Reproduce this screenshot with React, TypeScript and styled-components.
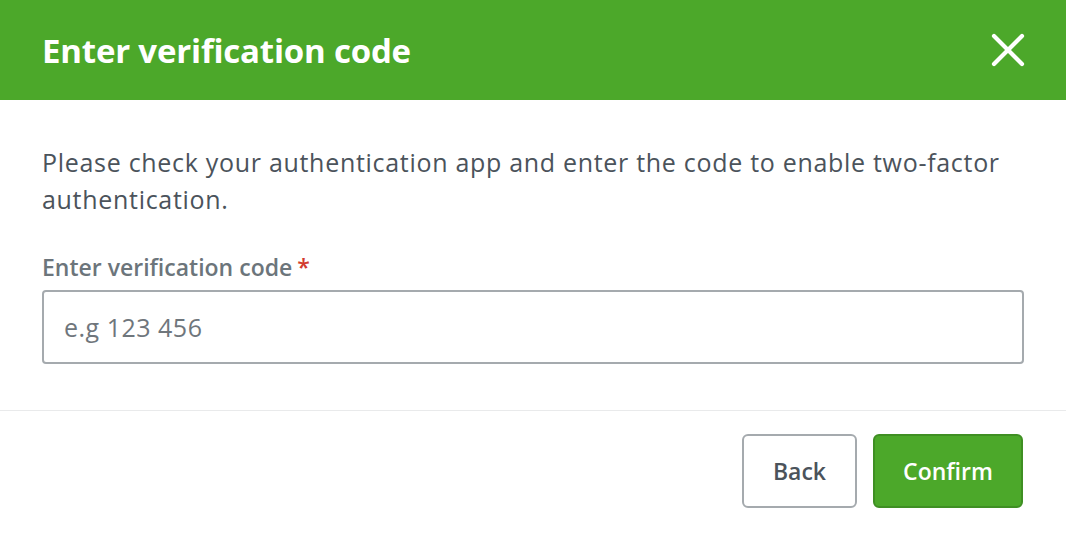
import React from 'react';
import styled, { createGlobalStyle } from 'styled-components';

const GlobalStyle = createGlobalStyle`
  html, body {
    margin: 0;
    padding: 0;
    background: #ffffff;
  }

  body {
    font-family: "Open Sans", Lato, sans-serif;
    -webkit-font-smoothing: antialiased;
  }

  * {
    box-sizing: border-box;
  }
`;

const Modal = styled.section`
  width: 1066px;
  height: 536px;
  background: #ffffff;
  display: flex;
  flex-direction: column;
`;

const Header = styled.header`
  height: 100px;
  padding: 0 42px;
  background: #4ca82a;
  display: flex;
  align-items: center;
  justify-content: space-between;
`;

const Title = styled.h1`
  margin: 0;
  color: #ffffff;
  font-size: 33px;
  font-weight: 700;
  letter-spacing: -0.2px;
`;

const CloseButton = styled.button`
  width: 36px;
  height: 36px;
  margin-right: -2px;
  padding: 0;
  border: none;
  background: transparent;
  color: #ffffff;
  display: flex;
  align-items: center;
  justify-content: center;
  cursor: pointer;
`;

const Body = styled.div`
  padding: 44px 42px 46px 42px;
  border-bottom: 1px solid #e9eaeb;
`;

const Intro = styled.p`
  margin: 0;
  color: #4b535b;
  font-size: 25px;
  letter-spacing: 0.7px;
  line-height: 37px;
`;

const Label = styled.label`
  display: block;
  margin-top: 33px;
  color: #6c757b;
  font-size: 23px;
  font-weight: 600;

  span {
    color: #d23b2f;
    margin-left: 5px;
  }
`;

const Input = styled.input`
  display: block;
  width: 100%;
  height: 74px;
  margin-top: 7px;
  padding: 0 20px;
  border: 2px solid #a5aaae;
  border-radius: 4px;
  font-family: inherit;
  font-size: 25px;
  letter-spacing: 0.5px;
  color: #4b535b;
  outline: none;

  &::placeholder {
    color: #6f767c;
  }
`;

const Footer = styled.footer`
  padding: 23px 43px 0 42px;
  display: flex;
  justify-content: flex-end;
  gap: 16px;
`;

const Button = styled.button<{ $primary?: boolean; $width: number }>`
  width: ${(p) => p.$width}px;
  height: 74px;
  border-radius: 6px;
  border: 2px solid ${(p) => (p.$primary ? '#3f8f23' : '#a5aaae')};
  background: ${(p) => (p.$primary ? '#4ca82a' : '#ffffff')};
  color: ${(p) => (p.$primary ? '#ffffff' : '#4b535b')};
  font-family: inherit;
  font-size: 23px;
  font-weight: 600;
  cursor: pointer;
`;

function CloseIcon() {
  return (
    <svg width="34" height="34" viewBox="0 0 34 34" fill="none">
      <path
        d="M3 3L31 31M31 3L3 31"
        stroke="currentColor"
        strokeWidth="4.2"
        strokeLinecap="round"
      />
    </svg>
  );
}

export default function App() {
  return (
    <>
      <GlobalStyle />
      <Modal>
        <Header>
          <Title>Enter verification code</Title>
          <CloseButton aria-label="Close">
            <CloseIcon />
          </CloseButton>
        </Header>

        <Body>
          <Intro>
            Please check your authentication app and enter the code to enable
            two-factor authentication.
          </Intro>

          <Label htmlFor="code">
            Enter verification code<span>*</span>
          </Label>
          <Input id="code" placeholder="e.g 123 456" />
        </Body>

        <Footer>
          <Button $width={115}>Back</Button>
          <Button $primary $width={150}>
            Confirm
          </Button>
        </Footer>
      </Modal>
    </>
  );
}
